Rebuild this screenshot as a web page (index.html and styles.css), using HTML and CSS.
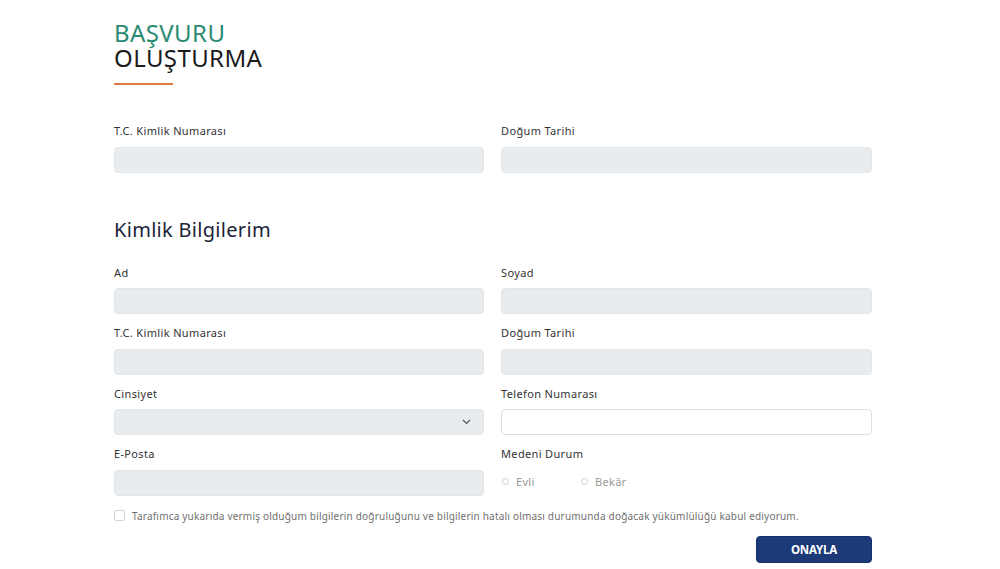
FILE: index.html
```html
<!DOCTYPE html>
<html lang="tr">
<head>
<meta charset="utf-8">
<title>Başvuru Oluşturma</title>
<link rel="stylesheet" href="styles.css">
</head>
<body>
<main class="page">
  <header class="title">
    <h1 class="title-text"><span class="title-accent">BAŞVURU</span><span class="title-main">OLUŞTURMA</span></h1>
    <div class="title-bar"></div>
  </header>

  <section class="grid first">
    <div class="field">
      <label class="label">T.C. Kimlik Numarası</label>
      <div class="input"></div>
    </div>
    <div class="field">
      <label class="label">Doğum Tarihi</label>
      <div class="input"></div>
    </div>
  </section>

  <h2 class="section-title">Kimlik Bilgilerim</h2>

  <section class="grid">
    <div class="field">
      <label class="label">Ad</label>
      <div class="input"></div>
    </div>
    <div class="field">
      <label class="label">Soyad</label>
      <div class="input"></div>
    </div>
    <div class="field">
      <label class="label">T.C. Kimlik Numarası</label>
      <div class="input"></div>
    </div>
    <div class="field">
      <label class="label">Doğum Tarihi</label>
      <div class="input"></div>
    </div>
    <div class="field">
      <label class="label">Cinsiyet</label>
      <div class="input select">
        <svg class="chev" width="9" height="6" viewBox="0 0 9 6"><path d="M1 1l3.5 3.5L8 1" fill="none" stroke="#555" stroke-width="1.2"/></svg>
      </div>
    </div>
    <div class="field">
      <label class="label">Telefon Numarası</label>
      <div class="input white"></div>
    </div>
    <div class="field">
      <label class="label">E-Posta</label>
      <div class="input"></div>
    </div>
    <div class="field">
      <label class="label">Medeni Durum</label>
      <div class="radios">
        <span class="radio"><span class="dot"></span>Evli</span>
        <span class="radio"><span class="dot"></span>Bekâr</span>
      </div>
    </div>
  </section>

  <div class="consent">
    <span class="box"></span>
    <span class="consent-text">Tarafımca yukarıda vermiş olduğum bilgilerin doğruluğunu ve bilgilerin hatalı olması durumunda doğacak yükümlülüğü kabul ediyorum.</span>
  </div>

  <div class="actions">
    <button class="btn">ONAYLA</button>
  </div>
</main>
</body>
</html>
```

FILE: styles.css
```css
* { box-sizing: border-box; }
html, body { margin: 0; padding: 0; background: #fff; }
body { font-family: "Noto Sans", "DejaVu Sans", sans-serif; color: #222; }

.page {
  width: 758px;
  margin-left: 114px;
  padding-top: 20px;
}

.title-text {
  margin: 0;
  font-weight: 400;
  font-size: 24px;
  line-height: 25px;
  letter-spacing: 0.4px;
  display: flex;
  flex-direction: column;
}
.title-accent { color: #2b8a72; }
.title-main { color: #1b1b1b; }
.title-bar {
  width: 59px;
  height: 2px;
  background: #e07a45;
  margin-top: 13px;
}

.grid {
  display: grid;
  grid-template-columns: 370px 371px;
  column-gap: 17px;
  row-gap: 11px;
}
.grid.first { margin-top: 38px; }

.field { display: flex; flex-direction: column; }
.label {
  font-size: 11px;
  line-height: 15px;
  color: #333;
  letter-spacing: 0.35px;
  margin-bottom: 8.5px;
}
.input {
  height: 26px;
  background: #e9ecee;
  border: 1px solid #e3e6e8;
  border-radius: 4px;
}
.input.white { background: #fff; border-color: #dcdfe2; }
.input.select {
  display: flex;
  align-items: center;
  justify-content: flex-end;
  padding-right: 12px;
}

.section-title {
  margin: 44px 0 22px;
  font-size: 20px;
  line-height: 26px;
  font-weight: 400;
  color: #1d2339;
  letter-spacing: 0.3px;
}

.radios {
  display: flex;
  gap: 21px;
  height: 24px;
  align-items: center;
  padding-left: 1px;
}
.radio {
  display: flex;
  align-items: center;
  gap: 7px;
  font-size: 11px;
  color: #9a9a9a;
  letter-spacing: 0.3px;
  width: 58px;
}
.dot {
  width: 7px;
  height: 7px;
  border: 1px solid #cfcfcf;
  border-radius: 50%;
}

.consent {
  display: flex;
  align-items: center;
  gap: 7px;
  margin-top: 13px;
}
.box {
  width: 11px;
  height: 11px;
  border: 1px solid #d4d4d4;
  border-radius: 2px;
}
.consent-text {
  font-size: 10px;
  color: #707070;
  letter-spacing: 0.2px;
}

.actions {
  display: flex;
  justify-content: flex-end;
  margin-top: 13px;
}
.btn {
  width: 116px;
  height: 27px;
  background: #1c3a78;
  color: #fff;
  border: 1px solid #14306a;
  border-radius: 4px;
  font-family: inherit;
  font-weight: 700;
  font-size: 11.5px;
  letter-spacing: -0.2px;
  padding: 0;
}
```
